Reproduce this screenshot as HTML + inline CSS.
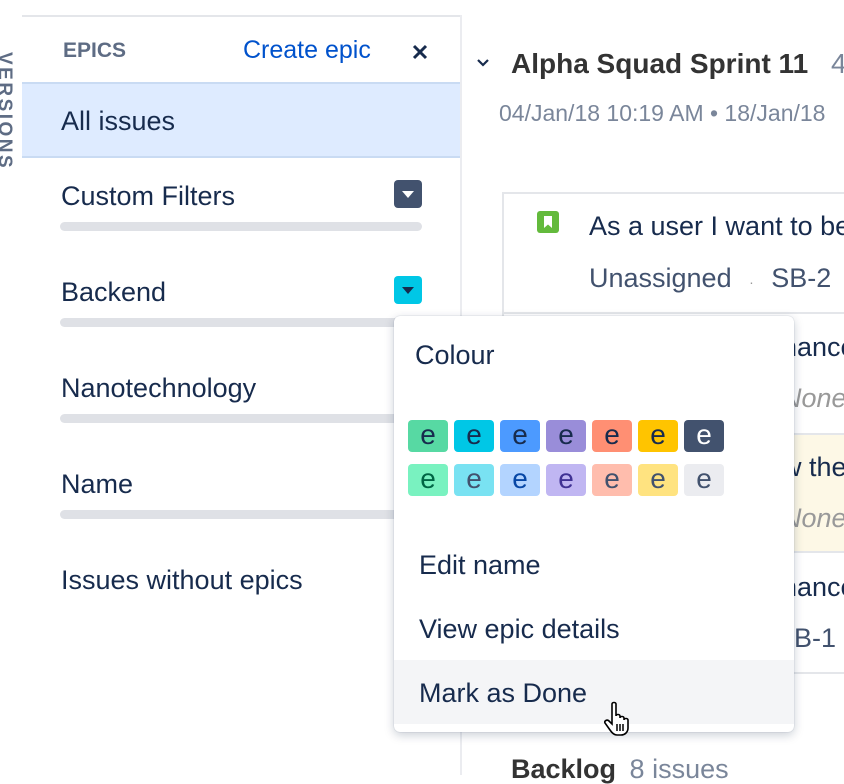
<!DOCTYPE html>
<html><head><meta charset="utf-8"><style>
*{margin:0;padding:0;box-sizing:border-box}
body{width:844px;height:774px;overflow:hidden;background:#fff;font-family:"Liberation Sans",sans-serif;color:#172b4d;position:relative}
.a{position:absolute;white-space:nowrap;line-height:1}
.bar{position:absolute;left:60px;width:362px;height:9px;border-radius:5px;background:#dfe1e6}
.btn{position:absolute;left:394px;width:28px;height:28px;border-radius:4px}
.btn:after{content:"";position:absolute;left:8px;top:11px;border-left:6px solid transparent;border-right:6px solid transparent;border-top:7px solid #fff}
.btn.c:after{border-top-color:#172b4d}
.sw{position:absolute;width:40px;height:32px;border-radius:4px;text-align:center;font-size:28px;line-height:29px;color:#172b4d}
.e{font-size:27px}
</style></head><body>
<div class="a" style="left:13px;top:52px;transform-origin:0 0;transform:rotate(90deg);font-size:19px;line-height:18px;font-weight:bold;color:#5e6c84;letter-spacing:2.5px">VERSIONS</div>
<div style="position:absolute;left:22px;top:15px;width:439px;height:2px;background:#e4e6ea"></div>
<div style="position:absolute;left:460px;top:15px;width:2px;height:760px;background:#ebecf0"></div>
<div class="a" style="left:63px;top:40px;font-size:21px;font-weight:bold;color:#5e6c84">EPICS</div>
<div class="a" style="left:243px;top:38px;font-size:25px;color:#0052cc">Create epic</div>
<svg style="position:absolute;left:412px;top:44px" width="16" height="16"><path d="M2 2L14 14M14 2L2 14" stroke="#172b4d" stroke-width="3"/></svg>
<div style="position:absolute;left:22px;top:82px;width:438px;height:76px;background:#deebff;border-top:2px solid #c9dbf3;border-bottom:2px solid #c9dbf3"></div>
<div class="a e" style="left:61px;top:108px">All issues</div>
<div class="a e" style="left:61px;top:183px">Custom Filters</div>
<div class="btn" style="top:180px;background:#42526e"></div>
<div class="bar" style="top:222px"></div>
<div class="a e" style="left:61px;top:279px">Backend</div>
<div class="btn c" style="top:276px;background:#00c7e6"></div>
<div class="bar" style="top:318px"></div>
<div class="a e" style="left:61px;top:375px">Nanotechnology</div>
<div class="bar" style="top:414px"></div>
<div class="a e" style="left:61px;top:471px">Name</div>
<div class="bar" style="top:510px"></div>
<div class="a e" style="left:61px;top:567px">Issues without epics</div>

<svg style="position:absolute;left:476px;top:58px" width="14" height="10"><path d="M2 2L7 7L12 2" stroke="#172b4d" stroke-width="2.2" fill="none"/></svg>
<div class="a" style="left:511px;top:50px;font-size:28px;font-weight:bold;color:#333">Alpha Squad Sprint 11</div>
<div class="a" style="left:831px;top:50px;font-size:28px;color:#7a869a">4</div>
<div class="a" style="left:499px;top:102px;font-size:23px;color:#7a869a">04/Jan/18 10:19 AM • 18/Jan/18</div>
<div style="position:absolute;left:502px;top:192px;width:360px;height:482px;border:2px solid #e4e6ea"></div>
<div style="position:absolute;left:504px;top:312px;width:360px;height:2px;background:#e4e6ea"></div>
<div style="position:absolute;left:504px;top:433px;width:360px;height:120px;background:#fdf8e6;border-top:2px solid #e4e6ea;border-bottom:2px solid #e4e6ea"></div>
<div style="position:absolute;left:537px;top:211px;width:22px;height:22px;background:#63ba3c;border-radius:3px"></div>
<svg style="position:absolute;left:537px;top:211px" width="22" height="22"><path d="M7 5H15V17L11 13.5L7 17Z" fill="#fff"/></svg>
<div class="a e" style="left:589px;top:213px">As a user I want to be</div>
<div class="a e" style="left:589px;top:265px;color:#42526e">Unassigned <span style="font-size:14px;color:#999;margin:0 10px">·</span> SB-2</div>
<div class="a e" style="left:782px;top:334px">hance</div>
<div class="a e" style="left:782px;top:385px;font-style:italic;color:#999">None</div>
<div class="a e" style="left:782px;top:454px">w the</div>
<div class="a e" style="left:782px;top:505px;font-style:italic;color:#999">None</div>
<div class="a e" style="left:782px;top:574px">hance</div>
<div class="a e" style="left:776px;top:625px;color:#42526e">SB-1</div>
<div class="a" style="left:511px;top:756px;font-size:27px;font-weight:bold;color:#333">Backlog <span style="font-weight:normal;color:#7a869a;margin-left:6px">8 issues</span></div>

<div style="position:absolute;left:394px;top:316px;width:400px;height:416px;background:#fff;border-radius:6px;box-shadow:0 3px 10px rgba(9,30,66,.22),0 0 1px rgba(9,30,66,.3);overflow:hidden">
<div class="a e" style="left:21px;top:26px">Colour</div>
<div style="position:absolute;left:0;top:344px;width:400px;height:64px;background:#f4f5f7"></div>
<div class="a e" style="left:25px;top:236px">Edit name</div>
<div class="a e" style="left:25px;top:300px">View epic details</div>
<div class="a e" style="left:25px;top:364px">Mark as Done</div>
<div class="sw" style="left:14px;top:104px;background:#57d9a3">e</div>
<div class="sw" style="left:60px;top:104px;background:#00c7e6">e</div>
<div class="sw" style="left:106px;top:104px;background:#4c9aff">e</div>
<div class="sw" style="left:152px;top:104px;background:#998dd9">e</div>
<div class="sw" style="left:198px;top:104px;background:#ff8f73">e</div>
<div class="sw" style="left:244px;top:104px;background:#ffc400">e</div>
<div class="sw" style="left:290px;top:104px;background:#42526e;color:#fff">e</div>
<div class="sw" style="left:14px;top:148px;background:#79f2c0;color:#006644">e</div>
<div class="sw" style="left:60px;top:148px;background:#79e2f2;color:#42526e">e</div>
<div class="sw" style="left:106px;top:148px;background:#b3d4ff;color:#0747a6">e</div>
<div class="sw" style="left:152px;top:148px;background:#c0b6f2;color:#403294">e</div>
<div class="sw" style="left:198px;top:148px;background:#ffbdad;color:#42526e">e</div>
<div class="sw" style="left:244px;top:148px;background:#ffe380;color:#42526e">e</div>
<div class="sw" style="left:290px;top:148px;background:#ebecf0;color:#42526e">e</div>
</div>
<svg style="position:absolute;left:604px;top:700px" width="32" height="36"><path d="M8 4c0-2 4-2 4 0v12c0-2 4-2 4 0v2c0-2 4-2 4 0v2c0-2 4-2 4 0v8c0 4-3 7-7 7h-4c-3 0-5-2-7-5l-5-7c-1-2 2-4 4-2l3 3Z" fill="#fff" stroke="#000" stroke-width="1.6"/><path d="M13 24v7M16 24v7M19 24v7" stroke="#000" stroke-width="1.5"/></svg>
</body></html>
